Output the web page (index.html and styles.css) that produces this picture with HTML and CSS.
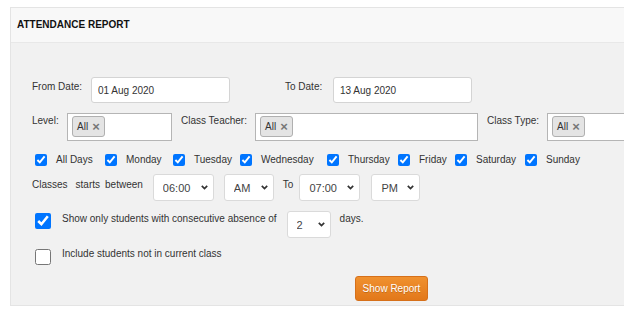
FILE: index.html
```html
<!DOCTYPE html>
<html lang="en">
<head>
  <meta charset="UTF-8">
  <meta name="viewport" content="width=device-width, initial-scale=1.0">
  <title>Attendance Report</title>
  <link rel="stylesheet" href="styles.css">
</head>
<body>
  <div class="panel">
    <div class="panel-heading">ATTENDANCE REPORT</div>

    <div class="panel-body">
      <div class="row row-dates">
        <label class="label label-from">From Date:</label>
        <input class="date-input" type="text" value="01 Aug 2020">
        <label class="label label-to">To Date:</label>
        <input class="date-input" type="text" value="13 Aug 2020">
      </div>

      <div class="row row-multi">
        <label class="label label-level">Level:</label>
        <div class="multi multi-level"><span class="chip">All <b>&times;</b></span></div>
        <label class="label label-teacher">Class Teacher:</label>
        <div class="multi multi-teacher"><span class="chip">All <b>&times;</b></span></div>
        <label class="label label-type">Class Type:</label>
        <div class="multi multi-type"><span class="chip">All <b>&times;</b></span></div>
      </div>

      <div class="row row-days">
        <label class="day day-all"><input type="checkbox" checked> All Days</label>
        <label class="day day-mon"><input type="checkbox" checked> Monday</label>
        <label class="day day-tue"><input type="checkbox" checked> Tuesday</label>
        <label class="day day-wed"><input type="checkbox" checked> Wednesday</label>
        <label class="day day-thu"><input type="checkbox" checked> Thursday</label>
        <label class="day day-fri"><input type="checkbox" checked> Friday</label>
        <label class="day day-sat"><input type="checkbox" checked> Saturday</label>
        <label class="day"><input type="checkbox" checked> Sunday</label>
      </div>

      <div class="row row-time">
        <span class="label word-classes">Classes</span>
        <span class="label word-starts">starts</span>
        <span class="label word-between">between</span>
        <div class="select sel-from">
          <select><option>06:00</option></select>
          <svg class="chevron" width="7" height="5" viewBox="0 0 7 5"><path d="M0.8 0.8 L3.5 3.6 L6.2 0.8" fill="none" stroke="#333" stroke-width="1.7"/></svg>
        </div>
        <div class="select sel-ampm">
          <select><option>AM</option></select>
          <svg class="chevron" width="7" height="5" viewBox="0 0 7 5"><path d="M0.8 0.8 L3.5 3.6 L6.2 0.8" fill="none" stroke="#333" stroke-width="1.7"/></svg>
        </div>
        <span class="label word-to">To</span>
        <div class="select sel-to">
          <select><option>07:00</option></select>
          <svg class="chevron" width="7" height="5" viewBox="0 0 7 5"><path d="M0.8 0.8 L3.5 3.6 L6.2 0.8" fill="none" stroke="#333" stroke-width="1.7"/></svg>
        </div>
        <div class="select sel-pm">
          <select><option>PM</option></select>
          <svg class="chevron" width="7" height="5" viewBox="0 0 7 5"><path d="M0.8 0.8 L3.5 3.6 L6.2 0.8" fill="none" stroke="#333" stroke-width="1.7"/></svg>
        </div>
      </div>

      <div class="row row-absence">
        <input class="big-check" type="checkbox" checked>
        <span class="label opt-text">Show only students with consecutive absence of</span>
        <div class="select sel-days">
          <select><option>2</option></select>
          <svg class="chevron" width="7" height="5" viewBox="0 0 7 5"><path d="M0.8 0.8 L3.5 3.6 L6.2 0.8" fill="none" stroke="#333" stroke-width="1.7"/></svg>
        </div>
        <span class="label word-days">days.</span>
      </div>

      <div class="row row-include">
        <input class="big-check" type="checkbox">
        <span class="label opt-text">Include students not in current class</span>
      </div>

      <div class="row row-button">
        <button class="btn-report">Show Report</button>
      </div>
    </div>
  </div>
</body>
</html>
```

FILE: styles.css
```css
html, body {
  overflow: hidden;
}
body {
  margin: 0;
  background: #fff;
  font-family: 'Liberation Sans', Arial, sans-serif;
  font-size: 10px;
  line-height: 12px;
  color: #333;
}
.panel {
  margin: 7px 0 0 10px;
  width: 760px;
  border: 1px solid #e4e4e4;
}
.panel-heading {
  height: 34px;
  line-height: 34px;
  padding-left: 6px;
  background: #f8f8f8;
  border-bottom: 1px solid #e8e8e8;
  font-weight: bold;
  color: #111;
}
.panel-body {
  background: #f1f1f1;
  padding: 34px 0 4px 21px;
}
.row {
  display: flex;
  align-items: flex-start;
}

/* dates */
.row-dates .label {
  padding-top: 4px;
}
.label-from {
  width: 59px;
}
.label-to {
  width: 48px;
  margin-left: 55px;
}
.date-input {
  box-sizing: border-box;
  width: 139px;
  height: 26px;
  margin: 0;
  padding: 0 6px;
  border: 1px solid #d4d4d4;
  border-radius: 3px;
  background: #fff;
  font-family: inherit;
  font-size: 10px;
  color: #333;
}

/* multi selects */
.row-multi {
  margin-top: 10px;
}
.row-multi .label {
  padding-top: 2px;
}
.label-level {
  width: 35px;
}
.label-teacher {
  width: 74px;
  margin-left: 9px;
}
.label-type {
  width: 60px;
  margin-left: 9px;
}
.multi {
  box-sizing: border-box;
  height: 28px;
  padding: 2px 4px;
  background: #fff;
  border: 1px solid #b5b5b5;
}
.multi-level {
  width: 105px;
}
.multi-teacher {
  width: 223px;
}
.multi-type {
  width: 140px;
}
.chip {
  display: inline-flex;
  align-items: center;
  box-sizing: border-box;
  height: 21px;
  padding: 0 4px 0 4px;
  background: #e4e4e4;
  border: 1px solid #b0b0b0;
  border-radius: 3px;
  color: #333;
}
.chip b {
  margin-left: 4px;
  font-size: 13px;
  line-height: 12px;
  color: #777;
}

/* days */
.row-days {
  margin-top: 12px;
  padding-left: 3px;
  align-items: center;
  height: 13px;
}
.day {
  display: flex;
  align-items: center;
}
.day input {
  width: 12px;
  height: 12px;
  margin: 0 9px 0 0;
  accent-color: #0075ff;
}
.day-all { width: 70px; }
.day-mon { width: 68px; }
.day-tue { width: 67px; }
.day-wed { width: 87px; }
.day-thu { width: 71px; }
.day-fri { width: 57px; }
.day-sat { width: 70px; }

/* time range */
.row-time {
  margin-top: 8px;
}
.row-time .label {
  padding-top: 5px;
}
.word-starts {
  margin-left: 8px;
}
.word-between {
  margin-left: 5px;
}
.word-to {
  margin-left: 9px;
  margin-right: 6px;
}
.select {
  position: relative;
}
.select select {
  box-sizing: border-box;
  height: 27px;
  margin: 0;
  padding: 0 0 0 9px;
  -webkit-appearance: none;
  appearance: none;
  background: #fff;
  border: 1px solid #dadada;
  border-radius: 3px;
  font-family: inherit;
  font-size: 11px;
  color: #444;
}
.chevron {
  position: absolute;
  right: 6px;
  top: 11px;
}
.sel-from {
  margin-left: 10px;
}
.sel-from select {
  width: 61px;
}
.sel-ampm {
  margin-left: 10px;
}
.sel-ampm select {
  width: 50px;
}
.sel-to select {
  width: 61px;
}
.sel-pm {
  margin-left: 11px;
}
.sel-pm select {
  width: 49px;
}

/* options */
.row-absence {
  margin-top: 10px;
}
.big-check {
  width: 16px;
  height: 16px;
  margin: 2px 0 0 3px;
  accent-color: #0075ff;
}
.opt-text {
  margin-left: 11px;
  padding-top: 2px;
}
.sel-days {
  margin-left: 10px;
}
.sel-days select {
  width: 44px;
}
.word-days {
  margin-left: 9px;
  padding-top: 2px;
}
.row-include {
  margin-top: 10px;
}
.row-include .big-check {
  margin-top: 1px;
}
.row-include .opt-text {
  padding-top: 0;
}

/* button */
.row-button {
  margin-top: 11px;
  padding-left: 323px;
}
.btn-report {
  box-sizing: border-box;
  width: 73px;
  height: 25px;
  padding: 0;
  border: 1px solid #d6701a;
  border-radius: 3px;
  background: linear-gradient(#f0912f, #e2781a);
  color: #fff;
  font-family: inherit;
  font-size: 10px;
  text-shadow: 0 1px 0 rgba(0, 0, 0, 0.2);
  cursor: pointer;
}
```
